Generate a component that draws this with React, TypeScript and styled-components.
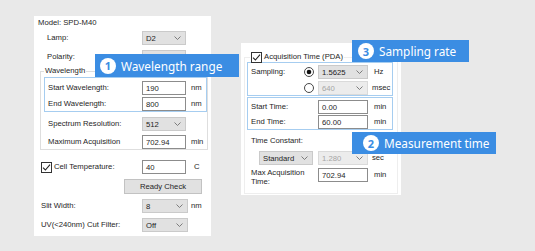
import styled, { createGlobalStyle } from 'styled-components';

const GlobalStyle = createGlobalStyle`
  html, body {
    margin: 0;
    padding: 0;
    background: #e9e9e9;
  }
  body {
    font-family: "Liberation Sans", Arial, sans-serif;
  }
`;

const Canvas = styled.div`
  position: relative;
  width: 535px;
  height: 251px;
  box-sizing: border-box;
  padding: 16px 0 0 34px;
  display: flex;
  align-items: flex-start;
  gap: 30px;
  overflow: hidden;
  background: #e9e9e9;
`;

const Panel = styled.div<{ $w: number; $h: number; $mt?: number }>`
  width: ${(p) => p.$w}px;
  height: ${(p) => p.$h}px;
  margin-top: ${(p) => p.$mt ?? 0}px;
  box-sizing: border-box;
  background: #fff;
  display: flex;
  flex-direction: column;
  font-size: 7.7px;
  color: #1e1e1e;
`;

const Row = styled.div<{ $h?: number; $mt?: number; $pl?: number; $top?: boolean }>`
  display: flex;
  align-items: ${(p) => (p.$top ? 'flex-start' : 'center')};
  height: ${(p) => p.$h ?? 14}px;
  margin-top: ${(p) => p.$mt ?? 0}px;
  padding-left: ${(p) => p.$pl ?? 0}px;
  white-space: nowrap;
`;

const Label = styled.span<{ $w?: number; $lh?: number }>`
  width: ${(p) => (p.$w ? `${p.$w}px` : 'auto')};
  flex-shrink: 0;
  display: flex;
  align-items: center;
  gap: 2px;
  line-height: ${(p) => p.$lh ?? 10}px;
  white-space: ${(p) => (p.$lh ? 'normal' : 'nowrap')};
`;

const Unit = styled.span<{ $ml?: number }>`
  margin-left: ${(p) => p.$ml ?? 5}px;
  line-height: 14px;
`;

const Select = styled.div<{ $w: number; $off?: boolean }>`
  width: ${(p) => p.$w}px;
  height: 14px;
  box-sizing: border-box;
  flex-shrink: 0;
  display: flex;
  align-items: center;
  justify-content: space-between;
  padding: 0 4px 0 3px;
  background: ${(p) => (p.$off ? '#ececec' : '#e1e1e1')};
  border: 1px solid ${(p) => (p.$off ? '#dadada' : '#cacaca')};
  color: ${(p) => (p.$off ? '#a5a5a5' : '#1e1e1e')};
`;

const TextBox = styled.div<{ $w: number }>`
  width: ${(p) => p.$w}px;
  height: 14px;
  box-sizing: border-box;
  flex-shrink: 0;
  display: flex;
  align-items: center;
  padding-left: 3px;
  background: #fff;
  border: 1px solid #8c8c8c;
`;

const PushButton = styled.div`
  margin: 5px 0 0 90px;
  width: 78px;
  height: 15px;
  box-sizing: border-box;
  display: flex;
  align-items: center;
  justify-content: center;
  background: #e1e1e1;
  border: 1px solid #c2c2c2;
`;

const Group = styled.fieldset<{ $w: number; $mt: number; $ml: number; $faint?: boolean; $pb?: number }>`
  width: ${(p) => p.$w}px;
  margin: ${(p) => p.$mt}px 0 0 ${(p) => p.$ml}px;
  padding: 0 0 ${(p) => p.$pb ?? 0}px 0;
  box-sizing: border-box;
  min-inline-size: 0;
  border: 1px solid ${(p) => (p.$faint ? '#eeeeee' : '#dedede')};
`;

const Legend = styled.legend<{ $ml: number }>`
  margin-left: ${(p) => p.$ml}px;
  padding: 0 1px;
  height: 10px;
  line-height: 10px;
  display: flex;
  align-items: center;
  gap: 2px;
`;

const Highlight = styled.div<{ $w: number; $mt: number; $ml: number; $pt: number; $pb?: number; $gap: number }>`
  width: ${(p) => p.$w}px;
  margin: ${(p) => p.$mt}px 0 0 ${(p) => p.$ml}px;
  padding: ${(p) => p.$pt}px 0 ${(p) => p.$pb ?? 0}px 3px;
  box-sizing: border-box;
  border: 1px solid #a6cdf0;
  display: flex;
  flex-direction: column;
  gap: ${(p) => p.$gap}px;
`;

const RadioSlot = styled.span`
  width: 14px;
  height: 10px;
  flex-shrink: 0;
  display: flex;
`;

const Callout = styled.div<{ $x: number; $y: number; $w: number; $h: number; $pl: number }>`
  position: absolute;
  left: ${(p) => p.$x}px;
  top: ${(p) => p.$y}px;
  width: ${(p) => p.$w}px;
  height: ${(p) => p.$h}px;
  box-sizing: border-box;
  padding-left: ${(p) => p.$pl}px;
  display: flex;
  align-items: center;
  gap: 5px;
  background: #3b8de3;
  color: #fff;
  font-family: "Noto Sans", "Open Sans", sans-serif;
  font-size: 11.8px;
  white-space: nowrap;
`;

const Badge = styled.span`
  width: 16px;
  height: 16px;
  border-radius: 50%;
  background: #fff;
  color: #3b8de3;
  font-size: 11px;
  font-weight: 700;
  display: flex;
  align-items: center;
  justify-content: center;
  flex-shrink: 0;
`;

const Chevron = () => (
  <svg width="7" height="4" viewBox="0 0 7 4">
    <polyline points="0.5,0.5 3.5,3.5 6.5,0.5" fill="none" stroke="#707070" strokeWidth="0.9" />
  </svg>
);

const CheckBox = () => (
  <svg width="11" height="11" viewBox="0 0 11 11">
    <rect x="0.5" y="0.5" width="10" height="10" fill="#fff" stroke="#333" />
    <path d="M2 5.6 L4.4 8 L9 2.6" fill="none" stroke="#222" strokeWidth="1.1" />
  </svg>
);

const Radio = ({ on }: { on?: boolean }) => (
  <svg width="10" height="10" viewBox="0 0 10 10">
    <circle cx="5" cy="5" r="4.5" fill="#fff" stroke="#333" strokeWidth="0.9" />
    {on && <circle cx="5" cy="5" r="2.3" fill="#111" />}
  </svg>
);

const Drop = ({ w, value, off }: { w: number; value: string; off?: boolean }) => (
  <Select $w={w} $off={off}>
    <span>{value}</span>
    <Chevron />
  </Select>
);

const DetectorPanel = () => (
  <Panel $w={177} $h={220}>
    <Row $h={12} $pl={4}>Model: SPD-M40</Row>
    <Row $mt={3} $pl={13}>
      <Label $w={95}>Lamp:</Label>
      <Drop w={44} value="D2" />
    </Row>
    <Row $mt={5} $pl={13}>
      <Label $w={95}>Polarity:</Label>
      <Drop w={44} value="" />
    </Row>
    <Group $w={168} $mt={2} $ml={6}>
      <Legend $ml={3}>Wavelength</Legend>
      <Highlight $w={163} $mt={1} $ml={3} $pt={3} $gap={2}>
        <Row>
          <Label $w={94}>Start Wavelength:</Label>
          <TextBox $w={44}>190</TextBox>
          <Unit>nm</Unit>
        </Row>
        <Row>
          <Label $w={94}>End Wavelength:</Label>
          <TextBox $w={44}>800</TextBox>
          <Unit>nm</Unit>
        </Row>
      </Highlight>
      <Row $mt={5} $pl={7}>
        <Label $w={94}>Spectrum Resolution:</Label>
        <Drop w={44} value="512" />
      </Row>
      <Row $mt={4} $pl={7}>
        <Label $w={94}>Maximum Acquisition</Label>
        <TextBox $w={44}>702.94</TextBox>
        <Unit>min</Unit>
      </Row>
    </Group>
    <Row $mt={10} $pl={7}>
      <Label $w={101}>
        <CheckBox />
        Cell Temperature:
      </Label>
      <TextBox $w={44}>40</TextBox>
      <Unit $ml={8}>C</Unit>
    </Row>
    <PushButton>Ready Check</PushButton>
    <Row $mt={5} $pl={7}>
      <Label $w={101}>Slit Width:</Label>
      <Drop w={46} value="8" />
      <Unit $ml={3}>nm</Unit>
    </Row>
    <Row $mt={5} $pl={7}>
      <Label $w={101}>UV(&lt;240nm) Cut Filter:</Label>
      <Drop w={46} value="Off" />
    </Row>
  </Panel>
);

const AcquisitionPanel = () => (
  <Panel $w={160} $h={152} $mt={27}>
    <Group $w={154} $mt={9} $ml={3} $faint $pb={6}>
      <Legend $ml={5}>
        <CheckBox />
        Acquisition Time (PDA)
      </Legend>
      <Highlight $w={146} $mt={0} $ml={2} $pt={2} $gap={2}>
        <Row>
          <Label $w={53}>Sampling:</Label>
          <RadioSlot>
            <Radio on />
          </RadioSlot>
          <Drop w={50} value="1.5625" />
          <Unit $ml={6}>Hz</Unit>
        </Row>
        <Row>
          <Label $w={53} />
          <RadioSlot>
            <Radio />
          </RadioSlot>
          <Drop w={50} value="640" off />
          <Unit $ml={4}>msec</Unit>
        </Row>
      </Highlight>
      <Highlight $w={146} $mt={1} $ml={2} $pt={2} $gap={1}>
        <Row>
          <Label $w={67}>Start Time:</Label>
          <TextBox $w={50}>0.00</TextBox>
          <Unit $ml={6}>min</Unit>
        </Row>
        <Row>
          <Label $w={67}>End Time:</Label>
          <TextBox $w={50}>60.00</TextBox>
          <Unit $ml={6}>min</Unit>
        </Row>
      </Highlight>
      <Row $h={12} $mt={4} $pl={6}>
        Time Constant:
      </Row>
      <Row $mt={5} $pl={14}>
        <Drop w={54} value="Standard" />
        <Unit $ml={5} />
        <Drop w={50} value="1.280" off />
        <Unit $ml={4}>sec</Unit>
      </Row>
      <Row $mt={3} $pl={6} $h={19} $top>
        <Label $w={67} $lh={9}>
          Max Acquisition Time:
        </Label>
        <TextBox $w={50}>702.94</TextBox>
        <Unit $ml={6}>min</Unit>
      </Row>
    </Group>
  </Panel>
);

export default function App() {
  return (
    <>
      <GlobalStyle />
      <Canvas>
        <DetectorPanel />
        <AcquisitionPanel />
        <Callout $x={95} $y={54} $w={144} $h={23} $pl={5}>
          <Badge>1</Badge>
          Wavelength range
        </Callout>
        <Callout $x={352} $y={40} $w={117} $h={22} $pl={6}>
          <Badge>3</Badge>
          Sampling rate
        </Callout>
        <Callout $x={352} $y={132} $w={144} $h={22} $pl={11}>
          <Badge>2</Badge>
          Measurement time
        </Callout>
      </Canvas>
    </>
  );
}
